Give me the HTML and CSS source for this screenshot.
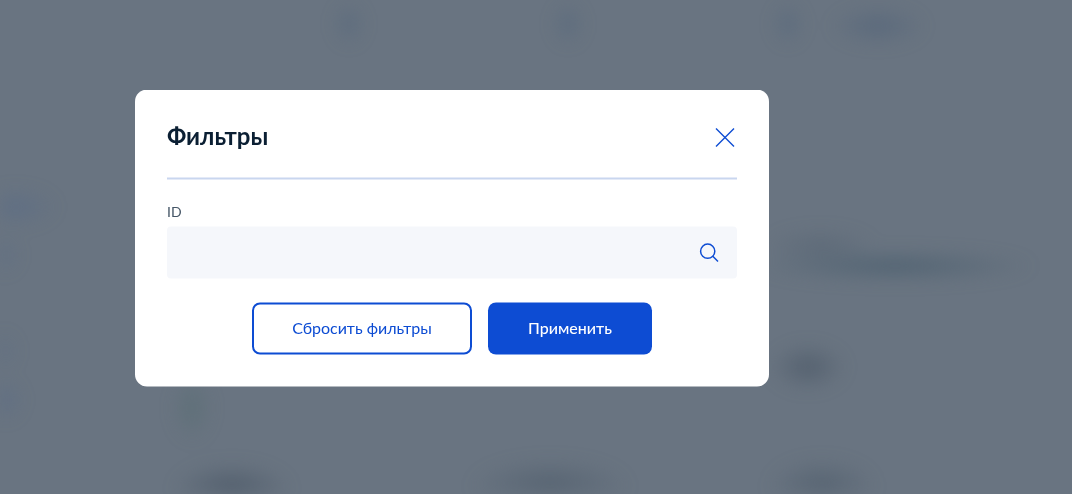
FILE: index.html
```html
<!DOCTYPE html>
<html lang="ru">
<head>
  <meta charset="UTF-8" />
  <title>Фильтры</title>
  <meta name="viewport" content="width=device-width, initial-scale=1" />
  <link rel="stylesheet" href="styles.css">
</head>
<body>
  <div class="overlay">
    <div class="modal">
      <div class="modal-head">
        <h2 class="modal-title">Фильтры</h2>
        <button class="icon-btn" type="button" aria-label="Закрыть">
          <svg width="20" height="20" viewBox="0 0 20 20" fill="none" stroke="#0d4cd3" stroke-width="1.4">
            <path d="M1 1l18 18M19 1L1 19" />
          </svg>
        </button>
      </div>

      <label class="field-label" for="idInput">ID</label>
      <div class="field">
        <input class="field-input" id="idInput" type="text" />
        <svg class="field-icon" width="20" height="20" viewBox="0 0 20 20" fill="none" stroke="#0d4cd3" stroke-width="1.5">
          <circle cx="8.7" cy="8.7" r="7.1" />
          <path d="M13.8 13.8l5.2 5.2" />
        </svg>
      </div>

      <div class="actions">
        <button class="btn btn-outline" type="button">Сбросить фильтры</button>
        <button class="btn btn-primary" type="button">Применить</button>
      </div>
    </div>
  </div>
</body>
</html>
```

FILE: styles.css
```css
html, body {
  height: 100%;
}
body {
  margin: 0;
  font-family: 'Lato', 'Noto Sans', sans-serif;
  color: #0b1f33;
  overflow: hidden;
}
.overlay {
  position: relative;
  box-sizing: border-box;
  height: 100%;
  padding: 90px 0 0 135px;
  background-color: #697481;
}
/* blurred page behind the dialog, painted as soft spots */
.overlay::before {
  content: '';
  position: absolute;
  inset: 0;
  filter: blur(8px);
  background-image:
    radial-gradient(ellipse 16px 22px at 349px 24px, rgba(80, 100, 122, 0.5), transparent),
    radial-gradient(ellipse 16px 22px at 568px 24px, rgba(80, 100, 122, 0.5), transparent),
    radial-gradient(ellipse 16px 22px at 788px 24px, rgba(80, 100, 122, 0.5), transparent),
    radial-gradient(ellipse 48px 20px at 878px 26px, rgba(80, 98, 120, 0.6), transparent),
    radial-gradient(ellipse 56px 18px at 820px 246px, rgba(80, 95, 110, 0.45), transparent),
    radial-gradient(ellipse 140px 16px at 895px 266px, rgba(75, 95, 110, 0.8), transparent),
    radial-gradient(ellipse 38px 24px at 808px 367px, rgba(75, 88, 102, 0.7), transparent),
    radial-gradient(ellipse 20px 34px at 192px 408px, rgba(85, 108, 112, 0.55), transparent),
    radial-gradient(ellipse 60px 28px at 232px 490px, rgba(75, 88, 102, 0.8), transparent),
    radial-gradient(ellipse 80px 28px at 550px 486px, rgba(78, 92, 106, 0.65), transparent),
    radial-gradient(ellipse 54px 28px at 822px 486px, rgba(78, 92, 106, 0.65), transparent),
    radial-gradient(ellipse 44px 20px at 14px 207px, rgba(85, 105, 135, 0.5), transparent),
    radial-gradient(ellipse 18px 20px at 2px 255px, rgba(85, 105, 135, 0.4), transparent),
    radial-gradient(ellipse 16px 20px at 2px 351px, rgba(85, 105, 135, 0.35), transparent),
    radial-gradient(ellipse 20px 22px at 3px 400px, rgba(85, 105, 135, 0.5), transparent);
}
.modal {
  position: relative;
  box-sizing: border-box;
  width: 634px;
  height: 297px;
  padding: 32px;
  background: #ffffff;
  border-radius: 12px;
  transform: translateY(-0.5px);
  will-change: transform;
}
.modal-head {
  display: flex;
  align-items: center;
  justify-content: space-between;
  height: 56px;
  border-bottom: 2px solid #c9d6ef;
}
.modal-title {
  margin: 0 0 28px;
  font-size: 24px;
  line-height: 30px;
  font-weight: 700;
}
.icon-btn {
  display: flex;
  margin: 0 2px 25px 0;
  padding: 0;
  border: none;
  background: none;
  cursor: pointer;
}
.field-label {
  display: block;
  margin-top: 22px;
  font-size: 14px;
  line-height: 20px;
  color: #445566;
}
.field {
  display: flex;
  align-items: center;
  height: 52px;
  margin-top: 5px;
  padding-right: 18px;
  background: #f5f7fb;
  border-radius: 4px;
}
.field-input {
  flex: 1;
  min-width: 0;
  height: 100%;
  padding: 0 16px;
  border: none;
  outline: none;
  background: none;
  font: inherit;
}
.actions {
  display: flex;
  justify-content: center;
  gap: 16px;
  margin-top: 24px;
}
.btn {
  box-sizing: border-box;
  height: 52px;
  padding-bottom: 5px;
  border-radius: 8px;
  font-family: inherit;
  font-size: 16px;
  cursor: pointer;
}
.btn-outline {
  width: 220px;
  border: 2px solid #0d4cd3;
  background: #ffffff;
  color: #0d4cd3;
}
.btn-primary {
  width: 164px;
  border: none;
  background: #0d4cd3;
  color: #ffffff;
  font-weight: 500;
}
```
